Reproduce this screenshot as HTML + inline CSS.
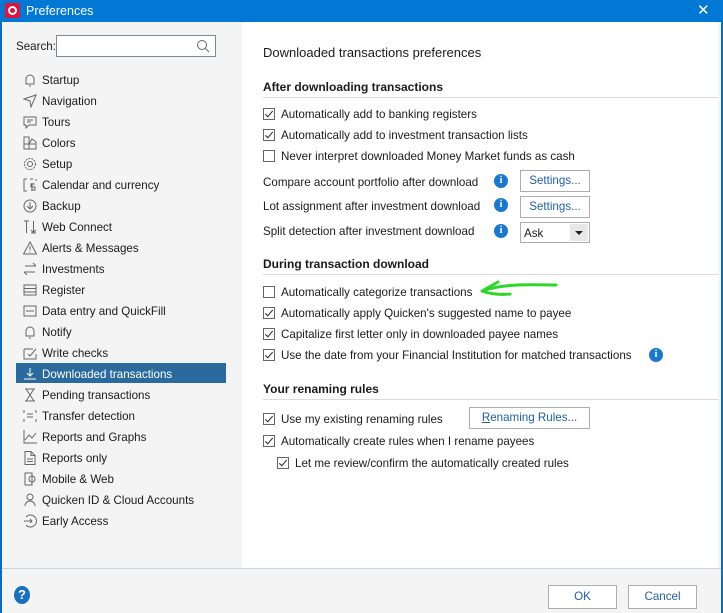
<!DOCTYPE html>
<html><head><style>
*{margin:0;padding:0;box-sizing:border-box}
body{width:723px;height:613px;overflow:hidden;background:#f4f4f4;font-family:"Liberation Sans",sans-serif;font-size:11.6px;color:#1a1a1a;position:relative}
.a{position:absolute;white-space:nowrap;line-height:16px;margin-top:1px}
.title{position:absolute;left:0;top:0;width:723px;height:22px;background:#0078d4;color:#fff;font-size:12.5px}
.bl{position:absolute;top:22px;width:2px;height:591px;background:#0a6cc4}
.nav{position:absolute;left:42px;line-height:16px;white-space:nowrap;margin-top:1px}
.ic{position:absolute;left:23px;width:14px;height:14px;fill:none;stroke:#666;stroke-width:1}
.cb{position:absolute;width:12px;height:12px;border:1px solid #666;background:#fff}
.cb.c::after{content:"";position:absolute;left:3px;top:0px;width:3px;height:7px;border:solid #222;border-width:0 1.5px 1.5px 0;transform:rotate(40deg)}
.btn{position:absolute;border:1px solid #adadad;background:#fff;color:#1f5fa8;text-align:center;line-height:20px}
.info{position:absolute;width:14px;height:14px;border-radius:50%;background:#1b78d0;color:#fff;font-weight:bold;font-size:10px;text-align:center;line-height:14px;font-family:"Liberation Serif",serif}
.h{position:absolute;left:263px;font-weight:bold;font-size:12px;line-height:16px;margin-top:1px}
.ln{position:absolute;left:263px;width:455px;height:1px;background:#d6dbe0}
</style></head><body>
<div class="title">
 <div style="position:absolute;left:5px;top:3px;width:15px;height:15px;background:#e2123b;border-radius:2px"><div style="position:absolute;left:3px;top:3px;width:9px;height:9px;border:2px solid #fff;border-radius:50%"></div></div>
 <span style="position:absolute;left:26px;top:4px">Preferences</span>
 <span style="position:absolute;left:697px;top:1px;font-size:15px">✕</span>
</div>
<div class="bl" style="left:0"></div><div class="bl" style="left:721px"></div>
<span class="a" style="left:16px;top:38px">Search:</span>
<div style="position:absolute;left:56px;top:35px;width:160px;height:22px;border:1px solid #7a8a99;background:#fff">
<svg style="position:absolute;right:5px;top:3px" width="14" height="14"><circle cx="6" cy="6" r="4.5" fill="none" stroke="#666"/><line x1="9.5" y1="9.5" x2="13" y2="13" stroke="#666"/></svg></div>
<div style="position:absolute;left:16px;top:363px;width:210px;height:20px;background:#2b6a9e"></div>
<div class="nav" style="top:72px">Startup</div>
<div class="nav" style="top:93px">Navigation</div>
<div class="nav" style="top:114px">Tours</div>
<div class="nav" style="top:135px">Colors</div>
<div class="nav" style="top:156px">Setup</div>
<div class="nav" style="top:177px">Calendar and currency</div>
<div class="nav" style="top:198px">Backup</div>
<div class="nav" style="top:219px">Web Connect</div>
<div class="nav" style="top:240px">Alerts &amp; Messages</div>
<div class="nav" style="top:261px">Investments</div>
<div class="nav" style="top:282px">Register</div>
<div class="nav" style="top:303px">Data entry and QuickFill</div>
<div class="nav" style="top:324px">Notify</div>
<div class="nav" style="top:345px">Write checks</div>
<div class="nav" style="top:366px;color:#fff">Downloaded transactions</div>
<div class="nav" style="top:387px">Pending transactions</div>
<div class="nav" style="top:408px">Transfer detection</div>
<div class="nav" style="top:429px">Reports and Graphs</div>
<div class="nav" style="top:450px">Reports only</div>
<div class="nav" style="top:471px">Mobile &amp; Web</div>
<div class="nav" style="top:492px">Quicken ID &amp; Cloud Accounts</div>
<div class="nav" style="top:513px">Early Access</div>
<svg class="ic" style="top:73px"><path d="M3 11V6a4 4 0 0 1 8 0v5H2.5h9M6 13h2"/></svg>
<svg class="ic" style="top:94px"><path d="M1 5l12-4-5 12-1-6z"/></svg>
<svg class="ic" style="top:115px"><path d="M1 2h12v8H6l-3 3v-3H1zM4 5h6M4 7h4"/></svg>
<svg class="ic" style="top:136px"><path d="M1 1h5v12H1zM1 8h12v5H6M6 8l3-5 4 3v2"/></svg>
<svg class="ic" style="top:157px"><circle cx="7" cy="7" r="5.5" stroke-dasharray="2 1"/><circle cx="7" cy="7" r="2.5"/></svg>
<svg class="ic" style="top:178px"><path d="M1 1v12h3M1 1h3M7 1h3M13 1v2M9 5v8M12 6H8v3h4v3H8"/></svg>
<svg class="ic" style="top:199px"><circle cx="7" cy="7" r="6"/><path d="M7 3v7M4 7l3 3 3-3"/></svg>
<svg class="ic" style="top:220px"><path d="M1 1h5M3.5 1v12M8 13h5M10.5 1v11M8 10l2.5 2.5L13 10"/></svg>
<svg class="ic" style="top:241px"><path d="M7 1l6.5 12H.5zM7 5v4M7 10.5v1"/></svg>
<svg class="ic" style="top:262px"><path d="M2 4h11M10 1l3 3M12 10H1M4 13l-3-3"/></svg>
<svg class="ic" style="top:283px"><path d="M1 2h12v10H1zM1 5.5h12M1 9h12"/></svg>
<svg class="ic" style="top:304px"><path d="M1 2h12v10H1zM3 7h8"/></svg>
<svg class="ic" style="top:325px"><path d="M3 11V6a4 4 0 0 1 8 0v5H2.5h9M6 13h2"/></svg>
<svg class="ic" style="top:346px"><path d="M1 3h9M1 3v10h12V8M5 8l2 2 6-7"/></svg>
<svg class="ic" style="top:367px;stroke:#fff"><path d="M1 12h12M7 1v8M4 6l3 3 3-3"/></svg>
<svg class="ic" style="top:388px"><path d="M2 1h10M2 13h10M3 1l4 6-4 6M11 1l-4 6 4 6"/></svg>
<svg class="ic" style="top:409px"><path d="M1 1v3M1 10v3M13 1v3M13 10v3M4 5h6M4 8h6"/></svg>
<svg class="ic" style="top:430px"><path d="M1 0v13h13M2 10l4-5 3 3 4-5"/></svg>
<svg class="ic" style="top:451px"><path d="M2 .5h6l4 4v9H2zM4 8h6M4 10.5h6M8 .5v4h4"/></svg>
<svg class="ic" style="top:472px"><path d="M2 1h7v12H2zM6 7a3 3 0 1 0 6 0a3 3 0 1 0-6 0"/></svg>
<svg class="ic" style="top:493px"><circle cx="7" cy="4" r="3"/><path d="M2 13a5 5 0 0 1 10 0"/></svg>
<svg class="ic" style="top:514px"><path d="M3 3a6 6 0 1 1 0 8M1 7h8M7 5l2 2-2 2"/></svg>
<div style="position:absolute;left:242px;top:22px;width:476px;height:546px;background:#fff"></div>
<div style="position:absolute;left:2px;top:568px;width:719px;height:1px;background:#c8d6de"></div>
<span class="a" style="left:263px;top:44px;font-size:13px">Downloaded transactions preferences</span>
<div class="h" style="top:78px">After downloading transactions</div><div class="ln" style="top:97px"></div>
<div class="cb c" style="left:263px;top:108px"></div><span class="a" style="left:281px;top:106px">Automatically add to banking registers</span>
<div class="cb c" style="left:263px;top:129px"></div><span class="a" style="left:281px;top:127px">Automatically add to investment transaction lists</span>
<div class="cb" style="left:263px;top:150px"></div><span class="a" style="left:281px;top:148px">Never interpret downloaded Money Market funds as cash</span>
<span class="a" style="left:263px;top:174px">Compare account portfolio after download</span>
<div class="info" style="left:494px;top:174px">i</div><div class="btn" style="left:520px;top:170px;width:70px;height:22px">Settings...</div>
<span class="a" style="left:263px;top:198px">Lot assignment after investment download</span>
<div class="info" style="left:494px;top:198px">i</div><div class="btn" style="left:520px;top:196px;width:70px;height:22px">Settings...</div>
<span class="a" style="left:263px;top:223px">Split detection after investment download</span>
<div class="info" style="left:494px;top:224px">i</div>
<div style="position:absolute;left:520px;top:222px;width:70px;height:21px;border:1px solid #adadad;background:#fff"><span class="a" style="left:3px;top:2px">Ask</span><div style="position:absolute;right:1px;top:1px;width:18px;height:17px;background:#e8e8e8"><div style="position:absolute;left:5px;top:7px;border:4px solid transparent;border-top:4px solid #222;border-bottom:0"></div></div></div>
<div class="h" style="top:255px">During transaction download</div><div class="ln" style="top:274px"></div>
<div class="cb" style="left:263px;top:286px"></div><span class="a" style="left:281px;top:284px">Automatically categorize transactions</span>
<svg style="position:absolute;left:474px;top:277px" width="86" height="24"><path d="M82 8C60 8 30 6 8 14M8 14L24 5M8 14c8 3 16 4 28 3" fill="none" stroke="#2fd62a" stroke-width="3" stroke-linecap="round"/></svg>
<div class="cb c" style="left:263px;top:307px"></div><span class="a" style="left:281px;top:305px">Automatically apply Quicken's suggested name to payee</span>
<div class="cb c" style="left:263px;top:328px"></div><span class="a" style="left:281px;top:326px">Capitalize first letter only in downloaded payee names</span>
<div class="cb c" style="left:263px;top:349px"></div><span class="a" style="left:281px;top:347px">Use the date from your Financial Institution for matched transactions</span>
<div class="info" style="left:649px;top:348px">i</div>
<div class="h" style="top:380px">Your renaming rules</div><div class="ln" style="top:399px"></div>
<div class="cb c" style="left:263px;top:413px"></div><span class="a" style="left:281px;top:411px">Use my existing renaming rules</span>
<div class="btn" style="left:469px;top:407px;width:121px;height:22px;color:#1f5fa8"><u>R</u>enaming Rules...</div>
<div class="cb c" style="left:263px;top:435px"></div><span class="a" style="left:281px;top:433px">Automatically create rules when I rename payees</span>
<div class="cb c" style="left:277px;top:457px"></div><span class="a" style="left:295px;top:455px">Let me review/confirm the automatically created rules</span>
<div style="position:absolute;left:14px;top:586px;width:16px;height:18px;border-radius:50%;background:#1b6fc0;color:#fff;font-weight:bold;text-align:center;line-height:18px;font-size:13px">?</div>
<div class="btn" style="left:548px;top:585px;width:69px;height:24px;line-height:22px;color:#1f5fa8">OK</div>
<div class="btn" style="left:628px;top:585px;width:69px;height:24px;line-height:22px;color:#1f5fa8">Cancel</div>
</body></html>
